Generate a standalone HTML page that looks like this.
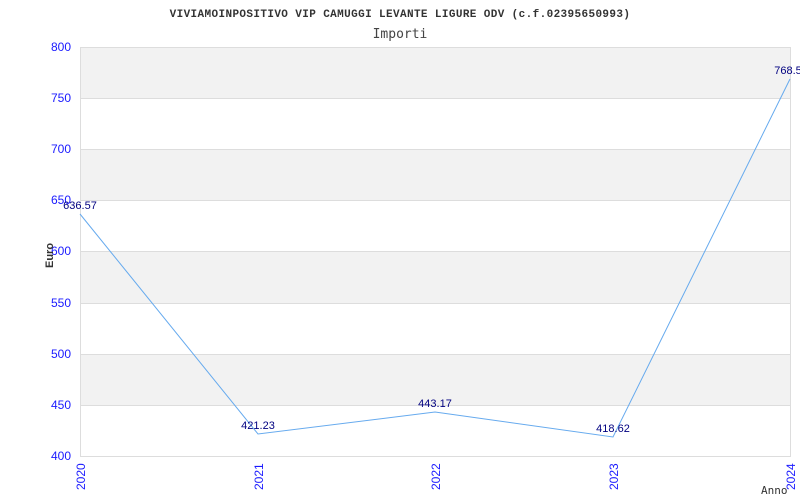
<!DOCTYPE html>
<html><head><meta charset="utf-8"><style>
html,body{margin:0;padding:0;background:#fff;width:800px;height:500px;overflow:hidden}
</style></head><body>
<svg width="800" height="500" xmlns="http://www.w3.org/2000/svg" font-family="Liberation Sans, sans-serif">
<text x="400" y="17" text-anchor="middle" font-family="Liberation Mono, monospace" font-weight="bold" font-size="11" letter-spacing="0.38" fill="#333">VIVIAMOINPOSITIVO VIP CAMUGGI LEVANTE LIGURE ODV (c.f.02395650993)</text>
<text x="400" y="38" text-anchor="middle" font-family="DejaVu Sans Mono, monospace" font-size="13" fill="#444">Importi</text>
<rect x="80" y="47" width="710" height="51" fill="#f2f2f2"/>
<rect x="80" y="149" width="710" height="51" fill="#f2f2f2"/>
<rect x="80" y="251" width="710" height="52" fill="#f2f2f2"/>
<rect x="80" y="354" width="710" height="51" fill="#f2f2f2"/>
<g stroke="#ddd" stroke-width="1">
<line x1="80" y1="47.5" x2="790" y2="47.5"/><line x1="80" y1="98.5" x2="790" y2="98.5"/>
<line x1="80" y1="149.5" x2="790" y2="149.5"/><line x1="80" y1="200.5" x2="790" y2="200.5"/>
<line x1="80" y1="251.5" x2="790" y2="251.5"/><line x1="80" y1="303.5" x2="790" y2="303.5"/>
<line x1="80" y1="354.5" x2="790" y2="354.5"/><line x1="80" y1="405.5" x2="790" y2="405.5"/>
<line x1="80" y1="456.5" x2="790" y2="456.5"/>
<line x1="80.5" y1="47" x2="80.5" y2="457"/><line x1="790.5" y1="47" x2="790.5" y2="457"/>
</g>
<g fill="#1a1aff" font-size="12" text-anchor="end">
<text x="71" y="51">800</text><text x="71" y="102">750</text><text x="71" y="153">700</text>
<text x="71" y="204">650</text><text x="71" y="255">600</text><text x="71" y="307">550</text>
<text x="71" y="358">500</text><text x="71" y="409">450</text><text x="71" y="460">400</text>
</g>
<g fill="#1a1aff" font-size="12">
<text transform="translate(85,490) rotate(-90)">2020</text>
<text transform="translate(263,490) rotate(-90)">2021</text>
<text transform="translate(440,490) rotate(-90)">2022</text>
<text transform="translate(618,490) rotate(-90)">2023</text>
<text transform="translate(795,490) rotate(-90)">2024</text>
</g>
<text transform="translate(53,268) rotate(-90)" font-size="11" font-weight="bold" fill="#333">Euro</text>
<text x="761" y="494" font-family="DejaVu Sans Mono, monospace" font-size="11" fill="#333">Anno</text>
<polyline points="80,214 258,434 435,412 613,437 790,79" fill="none" stroke="#66aaee" stroke-width="1"/>
<g fill="#000080" font-size="11" text-anchor="middle">
<text x="80" y="209">636.57</text><text x="258" y="429">421.23</text>
<text x="435" y="407">443.17</text><text x="613" y="432">418.62</text>
<text x="788" y="74">768.5</text>
</g>
</svg>
</body></html>
